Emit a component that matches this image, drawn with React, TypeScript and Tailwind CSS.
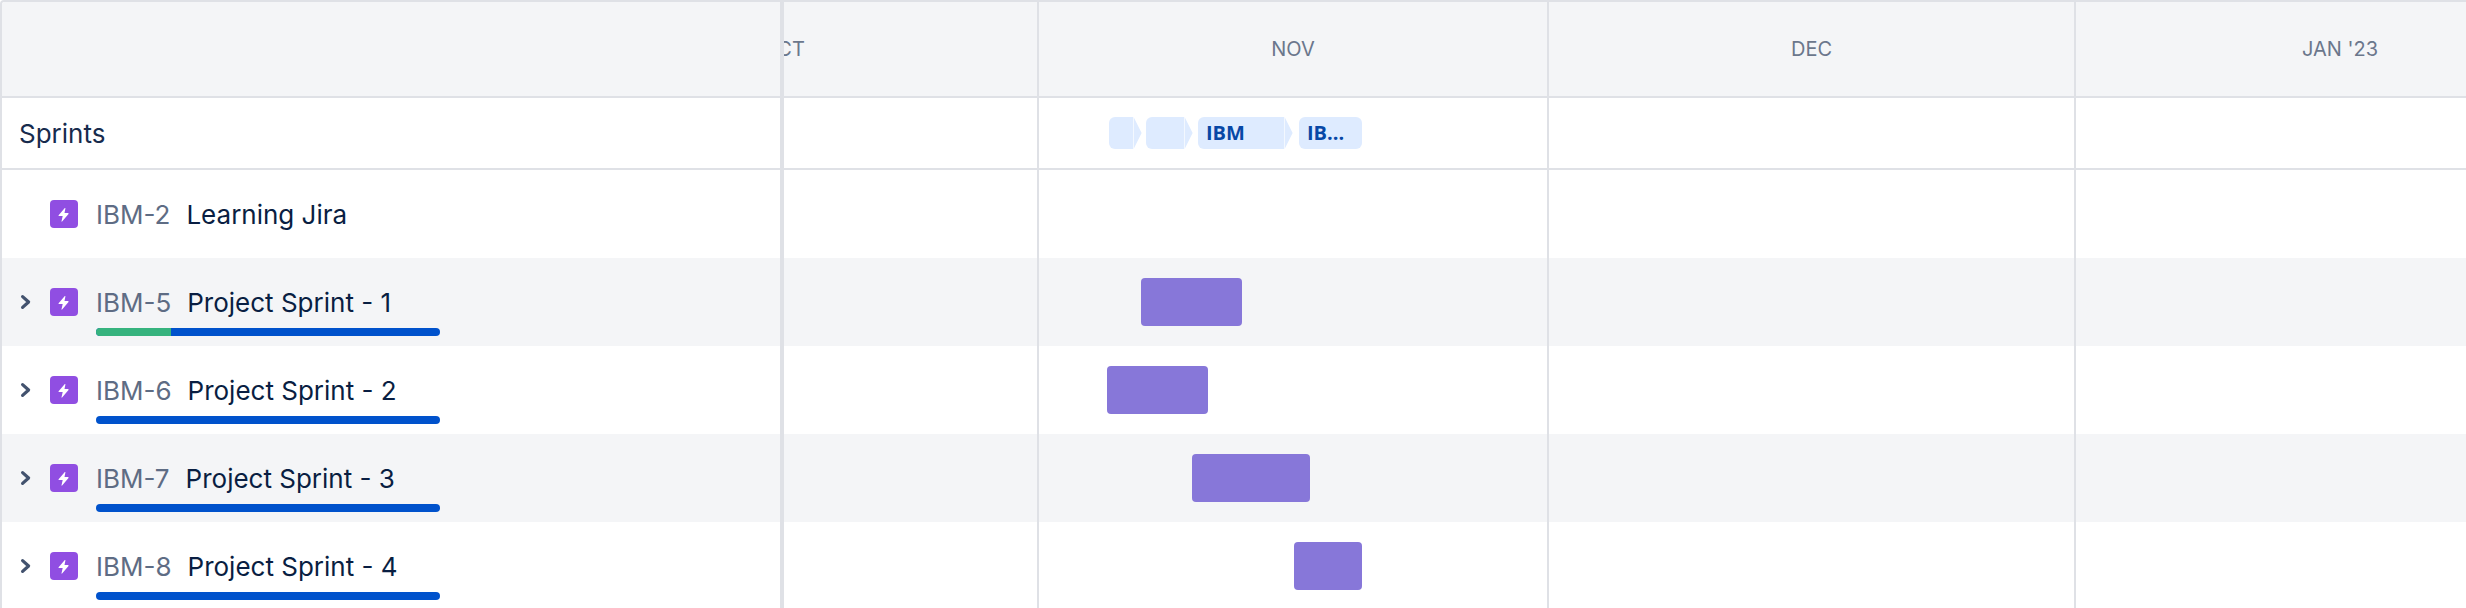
const FONT = "font-['Inter','Liberation_Sans',sans-serif]";

function Epic() {
  return (
    <span className="flex h-[28px] w-[28px] shrink-0 items-center justify-center rounded-[4px] bg-[#904ee2]">
      <svg width="28" height="28" viewBox="0 0 28 28" aria-hidden="true">
        <path d="M14.6 8.2 8.6 15.2a.5.5 0 0 0 .4.8h3.7l-1.2 5.2c-.1.4.3.6.6.3l6.4-7.6a.5.5 0 0 0-.4-.8h-3.6l.9-4.6c.1-.4-.5-.6-.8-.3Z" fill="#fff" />
      </svg>
    </span>
  );
}

function Chevron() {
  return (
    <svg width="12" height="16" viewBox="0 0 12 16" className="shrink-0" aria-hidden="true">
      <path d="M2.6 2.6 8.6 8l-6 5.4" fill="none" stroke="#42526e" strokeWidth="3.2" strokeLinecap="round" strokeLinejoin="round" />
    </svg>
  );
}

function Chip({ w, label, arrow, ml }: { w: string; label?: string; arrow: boolean; ml: string }) {
  return (
    <div className={`flex h-[32px] shrink-0 items-center ${ml}`}>
      <div className={`flex h-full items-center bg-[#deebff] pl-[8px] text-[20px] font-bold text-[#0747a6] font-['Open_Sans','Noto_Sans',sans-serif] ${w} ${arrow ? "rounded-l-[6px]" : "rounded-[6px]"}`}>
        {label}
      </div>
      {arrow && (
        <svg width="9" height="32" viewBox="0 0 9 32" className="shrink-0" aria-hidden="true">
          <path d="M0.6 0 8.6 16 0.6 32Z" fill="#deebff" />
        </svg>
      )}
    </div>
  );
}

const ROWS = [
  { id: "IBM-2", title: "Learning Jira", bg: "bg-white", expand: false, progress: "none", ml: "", w: "", h: "h-[88px]" },
  { id: "IBM-5", title: "Project Sprint - 1", bg: "bg-[#f4f5f7]", expand: true, progress: "green", ml: "ml-[102px]", w: "w-[101px]", h: "h-[88px]" },
  { id: "IBM-6", title: "Project Sprint - 2", bg: "bg-white", expand: true, progress: "blue", ml: "ml-[68px]", w: "w-[101px]", h: "h-[88px]" },
  { id: "IBM-7", title: "Project Sprint - 3", bg: "bg-[#f4f5f7]", expand: true, progress: "blue", ml: "ml-[153px]", w: "w-[118px]", h: "h-[88px]" },
  { id: "IBM-8", title: "Project Sprint - 4", bg: "bg-white", expand: true, progress: "blue", ml: "ml-[255px]", w: "w-[68px]", h: "h-[88px]" },
];

export default function App() {
  return (
    <div className={`h-[608px] w-[2466px] overflow-hidden rounded-tl-[4px] border-l-2 border-t-2 border-[#dfe1e6] bg-white ${FONT}`}>
      <div className="flex h-[96px] border-b-2 border-[#dfe1e6] bg-[#f4f5f7] text-[20px] text-[#6b778c]">
        <div className="w-[778px] shrink-0 border-r-4 border-[#dfe1e6] box-content" />
        <div className="flex w-[253px] shrink-0 items-center overflow-hidden border-r-2 border-[#dfe1e6] box-content">
          <span className="ml-[-22px]">OCT</span>
        </div>
        <div className="flex w-[508px] shrink-0 items-center justify-center border-r-2 border-[#dfe1e6] box-content">NOV</div>
        <div className="flex w-[525px] shrink-0 items-center justify-center border-r-2 border-[#dfe1e6] box-content">DEC</div>
        <div className="flex w-[528px] shrink-0 items-center justify-center">JAN '23</div>
        <div className="flex-1" />
      </div>

      <div className="flex h-[72px] border-b-2 border-[#dfe1e6]">
        <div className="box-content flex w-[778px] shrink-0 items-center border-r-4 border-[#dfe1e6] pl-0 text-[26px] text-[#172b4d]">
          <span className="ml-[17px]">Sprints</span>
        </div>
        <div className="box-content w-[253px] shrink-0 border-r-2 border-[#dfe1e6]" />
        <div className="box-content flex w-[508px] shrink-0 items-center border-r-2 border-[#dfe1e6]">
          <Chip ml="ml-[70px]" w="w-[24px]" arrow />
          <Chip ml="ml-[4px]" w="w-[38px]" arrow />
          <Chip ml="ml-[5px]" w="w-[86px]" label="IBM" arrow />
          <Chip ml="ml-[6px]" w="w-[63px]" label="IB..." arrow={false} />
        </div>
        <div className="box-content w-[525px] shrink-0 border-r-2 border-[#dfe1e6]" />
        <div className="flex-1" />
      </div>

      {ROWS.map((r) => (
        <div key={r.id} className={`flex ${r.h} ${r.bg}`}>
          <div className="box-content relative w-[778px] shrink-0 border-r-4 border-[#dfe1e6]">
            <div className="flex h-full flex-col pl-[18px]">
              <div className="flex h-[88px] items-center">
                <div className="w-[30px] shrink-0">{r.expand && <Chevron />}</div>
                <Epic />
                <span className="ml-[18px] text-[26px] text-[#5e6c84]">{r.id}</span>
                <span className="ml-[16px] text-[26px] text-[#091e42]">{r.title}</span>
              </div>
            </div>
            {r.progress !== "none" && (
              <div className="absolute left-[94px] top-[70px] flex h-[8px] w-[344px] overflow-hidden rounded-[4px] bg-[#0052cc]">
                {r.progress === "green" && <div className="h-full w-[75px] bg-[#36b37e]" />}
              </div>
            )}
          </div>
          <div className="box-content w-[253px] shrink-0 border-r-2 border-[#dfe1e6]" />
          <div className="box-content flex w-[508px] shrink-0 items-center border-r-2 border-[#dfe1e6]">
            {r.w && <div className={`h-[48px] rounded-[4px] bg-[#8777d9] ${r.ml} ${r.w}`} />}
          </div>
          <div className="box-content w-[525px] shrink-0 border-r-2 border-[#dfe1e6]" />
          <div className="flex-1" />
        </div>
      ))}
    </div>
  );
}
